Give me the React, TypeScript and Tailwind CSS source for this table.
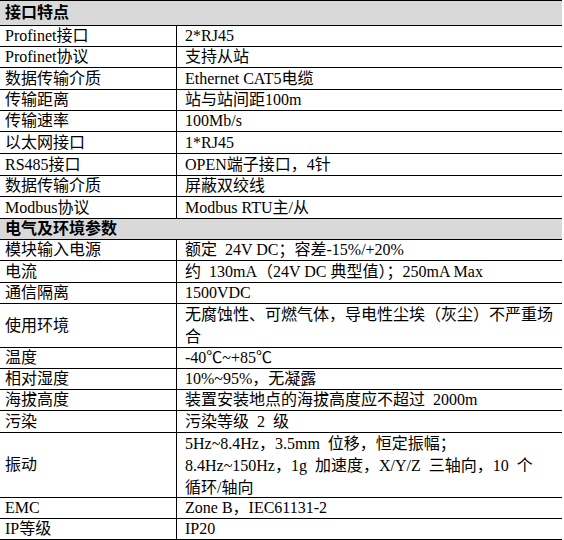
type Row =
  | { kind: 'head'; title: string; h: string }
  | { kind: 'row'; label: string; value: string[]; h: string };

const rows: Row[] = [
  { kind: 'head', title: '接口特点', h: 'h-[25px]' },
  { kind: 'row', label: 'Profinet接口', value: ['2*RJ45'], h: 'h-[21px]' },
  { kind: 'row', label: 'Profinet协议', value: ['支持从站'], h: 'h-[21px]' },
  { kind: 'row', label: '数据传输介质', value: ['Ethernet CAT5电缆'], h: 'h-[22px]' },
  { kind: 'row', label: '传输距离', value: ['站与站间距100m'], h: 'h-[21px]' },
  { kind: 'row', label: '传输速率', value: ['100Mb/s'], h: 'h-[21px]' },
  { kind: 'row', label: '以太网接口', value: ['1*RJ45'], h: 'h-[22px]' },
  { kind: 'row', label: 'RS485接口', value: ['OPEN端子接口，4针'], h: 'h-[22px]' },
  { kind: 'row', label: '数据传输介质', value: ['屏蔽双绞线'], h: 'h-[21px]' },
  { kind: 'row', label: 'Modbus协议', value: ['Modbus RTU主/从'], h: 'h-[22px]' },
  { kind: 'head', title: '电气及环境参数', h: 'h-[21px]' },
  { kind: 'row', label: '模块输入电源', value: ['额定  24V DC；容差-15%/+20%'], h: 'h-[21px]' },
  { kind: 'row', label: '电流', value: ['约  130mA（24V DC 典型值）；250mA Max'], h: 'h-[22px]' },
  { kind: 'row', label: '通信隔离', value: ['1500VDC'], h: 'h-[21px]' },
  {
    kind: 'row',
    label: '使用环境',
    value: ['无腐蚀性、可燃气体，导电性尘埃（灰尘）不严重场', '合'],
    h: 'h-[44px]',
  },
  { kind: 'row', label: '温度', value: ['-40℃~+85℃'], h: 'h-[21px]' },
  { kind: 'row', label: '相对湿度', value: ['10%~95%，无凝露'], h: 'h-[21px]' },
  { kind: 'row', label: '海拔高度', value: ['装置安装地点的海拔高度应不超过  2000m'], h: 'h-[21px]' },
  { kind: 'row', label: '污染', value: ['污染等级  2  级'], h: 'h-[22px]' },
  {
    kind: 'row',
    label: '振动',
    value: [
      '5Hz~8.4Hz，3.5mm  位移，恒定振幅；',
      '8.4Hz~150Hz，1g  加速度，X/Y/Z  三轴向，10  个',
      '循环/轴向',
    ],
    h: 'h-[65px]',
  },
  { kind: 'row', label: 'EMC', value: ['Zone B，IEC61131-2'], h: 'h-[21px]' },
  { kind: 'row', label: 'IP等级', value: ['IP20'], h: 'h-[21px]' },
];

export default function App() {
  return (
    <div className="w-[564px] h-[540px] bg-white text-black font-['Liberation_Serif','Noto_Sans_CJK_SC',serif] text-[16px]">
      <div className="w-[562px] border-b border-black">
        {rows.map((r, i) =>
          r.kind === 'head' ? (
            <div key={i} className={`${r.h} border-t border-black bg-[#d9d9d9] flex items-center pl-[5px]`}>
              <span className="font-bold leading-[20px]">{r.title}</span>
            </div>
          ) : (
            <div key={i} className={`${r.h} border-t border-black flex`}>
              <div className="w-[177px] border-r border-black flex items-center pl-[5px] leading-[20px] whitespace-pre">
                {r.label}
              </div>
              <div
                className={`flex-1 pl-[8px] flex flex-col ${
                  r.value.length > 1 ? 'justify-start' : 'justify-center'
                }`}
              >
                {r.value.map((v, j) => (
                  <div key={j} className="leading-[22px] whitespace-pre">
                    {v}
                  </div>
                ))}
              </div>
            </div>
          ),
        )}
      </div>
    </div>
  );
}
